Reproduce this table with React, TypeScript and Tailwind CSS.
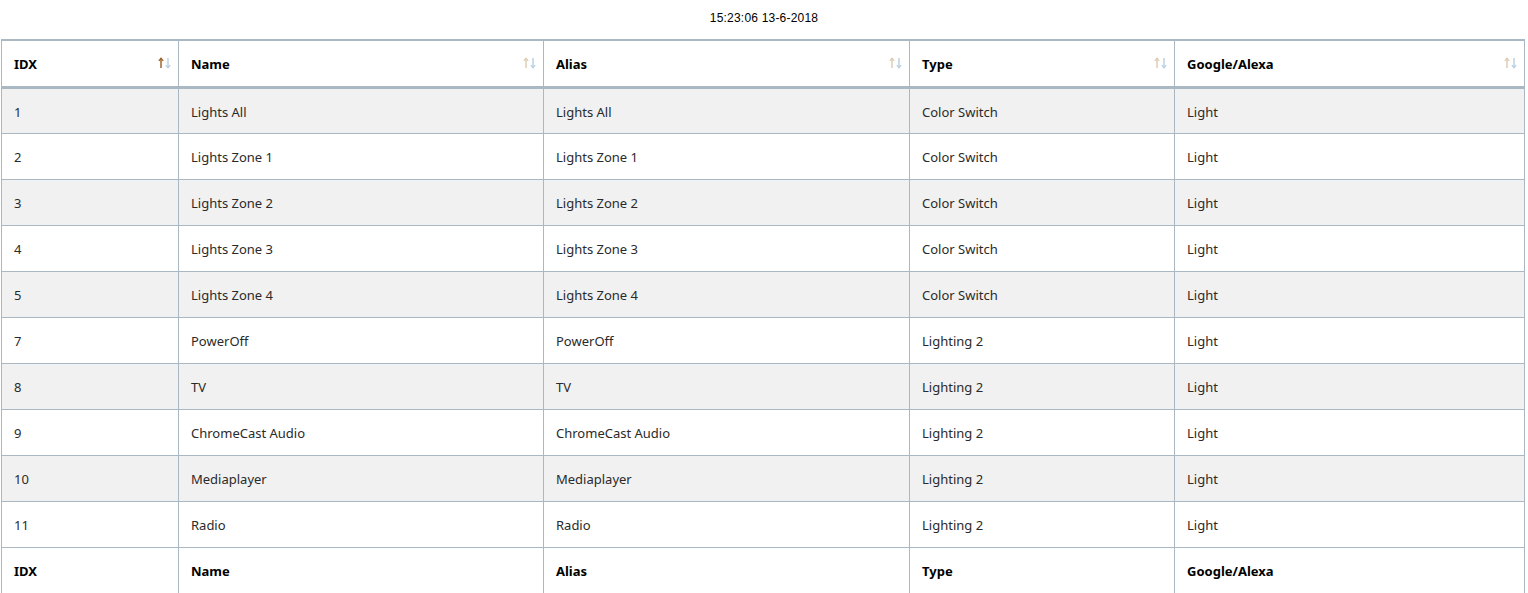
const rows = [
  ["1", "Lights All", "Lights All", "Color Switch", "Light"],
  ["2", "Lights Zone 1", "Lights Zone 1", "Color Switch", "Light"],
  ["3", "Lights Zone 2", "Lights Zone 2", "Color Switch", "Light"],
  ["4", "Lights Zone 3", "Lights Zone 3", "Color Switch", "Light"],
  ["5", "Lights Zone 4", "Lights Zone 4", "Color Switch", "Light"],
  ["7", "PowerOff", "PowerOff", "Lighting 2", "Light"],
  ["8", "TV", "TV", "Lighting 2", "Light"],
  ["9", "ChromeCast Audio", "ChromeCast Audio", "Lighting 2", "Light"],
  ["10", "Mediaplayer", "Mediaplayer", "Lighting 2", "Light"],
  ["11", "Radio", "Radio", "Lighting 2", "Light"],
];

const cols = ["IDX", "Name", "Alias", "Type", "Google/Alexa"];
const widths = ["w-[177px]", "w-[365px]", "w-[366px]", "w-[265px]", "w-[350px]"];

function SortIcon({ active }: { active?: boolean }) {
  const up = active ? "#9a5a1e" : "#dccab0";
  return (
    <svg className="absolute right-[7px] top-1/2 -translate-y-1/2" width="13" height="12" viewBox="0 0 13 12">
      <path d="M3 1.5V11" stroke={up} strokeWidth="1.4" />
      <path d="M0.8 3.8L3 1.2L5.2 3.8" stroke={up} strokeWidth="1.2" fill="none" />
      <path d="M10 1V10.5" stroke="#b8cde0" strokeWidth="1.4" />
      <path d="M7.8 8.2L10 10.8L12.2 8.2" stroke="#b8cde0" strokeWidth="1.2" fill="none" />
    </svg>
  );
}

export default function App() {
  return (
    <div className="bg-white min-h-screen text-[13px] text-[#222] font-['Noto_Sans','Open_Sans',sans-serif]">
      <div className="h-[39px] pt-[10px] text-center text-[12px] text-black font-['Liberation_Sans',Arial,sans-serif] leading-[16px] tracking-[0.2px]">
        15:23:06 13-6-2018
      </div>
      <table className="ml-[1px] w-[1524px] border-collapse table-fixed">
        <thead>
          <tr className="h-[47px]">
            {cols.map((c, i) => (
              <th
                key={c}
                className={`${widths[i]} relative text-left font-bold text-black px-[12px] pt-[3px] border border-[#a9b8c3] border-t-2 border-b-[3px]`}
              >
                {c}
                <SortIcon active={i === 0} />
              </th>
            ))}
          </tr>
        </thead>
        <tbody>
          {rows.map((r, ri) => (
            <tr key={ri} className={`h-[46px] ${ri % 2 === 0 ? "bg-[#f1f1f1]" : "bg-white"}`}>
              {r.map((v, ci) => (
                <td key={ci} className="px-[12px] pt-[4px] border border-[#a9b8c3] text-[#2a2a2a]">
                  {v}
                </td>
              ))}
            </tr>
          ))}
        </tbody>
        <tfoot>
          <tr className="h-[46px]">
            {cols.map((c) => (
              <th key={c} className="text-left font-bold text-black px-[12px] pt-[4px] border border-[#a9b8c3]">
                {c}
              </th>
            ))}
          </tr>
        </tfoot>
      </table>
    </div>
  );
}
